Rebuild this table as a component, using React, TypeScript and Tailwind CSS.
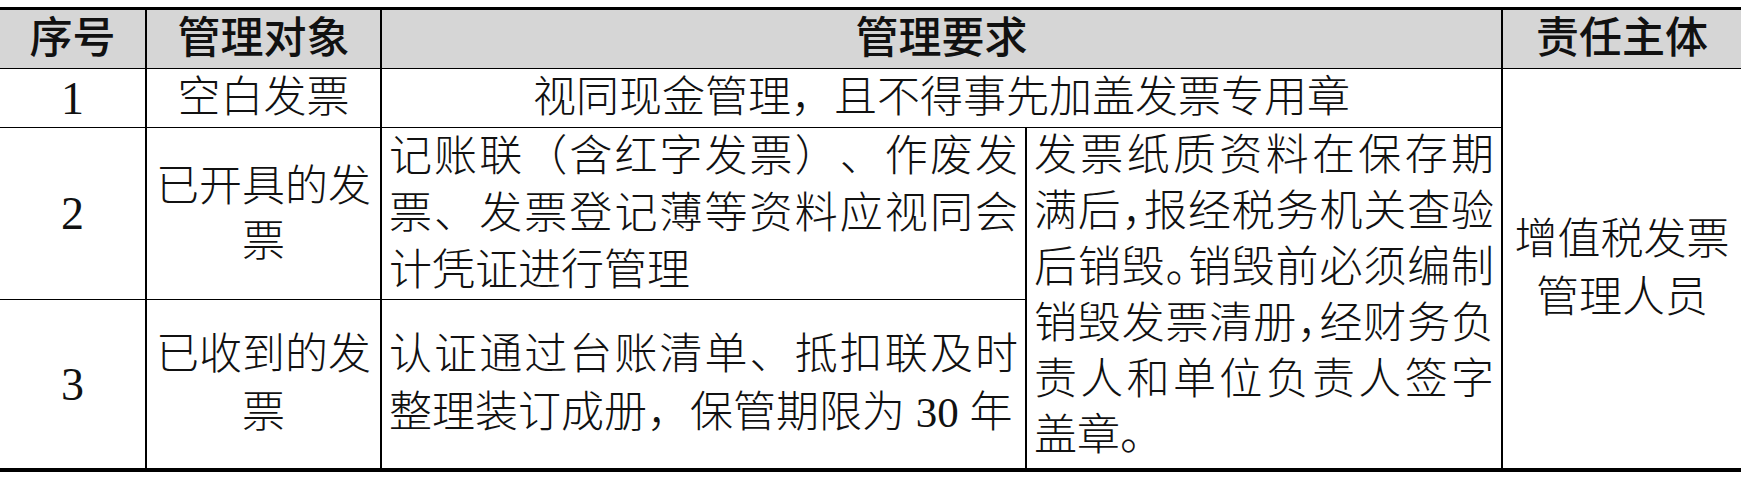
import React from 'react';

const font = "font-['Liberation_Serif','Noto_Sans_CJK_SC',serif]";
const line = 'border-black';

function Justified({ lines, className = '' }: { lines: string[]; className?: string }) {
  return (
    <div className={className}>
      {lines.map((t, i) => (
        <div
          key={i}
          className={i < lines.length - 1 ? 'text-justify [text-align-last:justify]' : 'text-left'}
        >
          {t}
        </div>
      ))}
    </div>
  );
}

export default function App() {
  return (
    <div className={`w-[1741px] h-[479px] bg-white pt-[7px] text-[#111] ${font}`}>
      <div className="grid grid-cols-[147px_235px_645px_476px_238px] grid-rows-[59px_59px_172px_168px] border-t-[3px] border-b-[4px] border-black text-[43px]">
        {/* header */}
        <div className={`flex items-center justify-center bg-[#d6d6d6] border-r-2 border-b ${line} font-medium`}>序号</div>
        <div className={`flex items-center justify-center bg-[#d6d6d6] border-r-2 border-b ${line} font-medium`}>管理对象</div>
        <div className={`col-span-2 flex items-center justify-center bg-[#d6d6d6] border-r-2 border-b ${line} font-medium`}>管理要求</div>
        <div className={`flex items-center justify-center bg-[#d6d6d6] border-b ${line} font-medium`}>责任主体</div>

        {/* row 1 */}
        <div className={`flex items-center justify-center border-r-2 border-b ${line} text-[46px]`}>1</div>
        <div className={`flex items-center justify-center border-r-2 border-b ${line} font-light`}>空白发票</div>
        <div className={`col-span-2 flex items-center justify-center border-r-2 border-b ${line} font-light`}>
          视同现金管理，且不得事先加盖发票专用章
        </div>
        <div className="row-span-3 flex flex-col items-center justify-center text-center leading-[58px] font-light">
          <div>增值税发票</div>
          <div>管理人员</div>
        </div>

        {/* row 2 */}
        <div className={`flex items-center justify-center border-r-2 border-b ${line} text-[46px]`}>2</div>
        <div className={`flex flex-col items-center justify-center text-center border-r-2 border-b ${line} leading-[55px] font-light`}>
          <div>已开具的发</div>
          <div>票</div>
        </div>
        <div className={`flex flex-col justify-center border-r-2 border-b ${line} px-[7px] leading-[57px] font-light [text-spacing-trim:space-all]`}>
          <Justified
            lines={['记账联（含红字发票）、作废发', '票、发票登记薄等资料应视同会', '计凭证进行管理']}
          />
        </div>
        <div className={`row-span-2 border-r-2 ${line} px-[7px] leading-[56px] font-light [font-feature-settings:'halt']`}>
          <Justified
            lines={[
              '发票纸质资料在保存期',
              '满后，报经税务机关查验',
              '后销毁。销毁前必须编制',
              '销毁发票清册，经财务负',
              '责人和单位负责人签字',
              '盖章。',
            ]}
          />
        </div>

        {/* row 3 */}
        <div className={`flex items-center justify-center border-r-2 ${line} text-[46px]`}>3</div>
        <div className={`flex flex-col items-center justify-center text-center border-r-2 ${line} leading-[58px] font-light`}>
          <div>已收到的发</div>
          <div>票</div>
        </div>
        <div className={`flex flex-col justify-center border-r-2 ${line} px-[7px] leading-[58px] font-light [text-spacing-trim:space-all]`}>
          <Justified lines={['认证通过台账清单、抵扣联及时', '整理装订成册，保管期限为 30 年']} />
        </div>
      </div>
    </div>
  );
}
